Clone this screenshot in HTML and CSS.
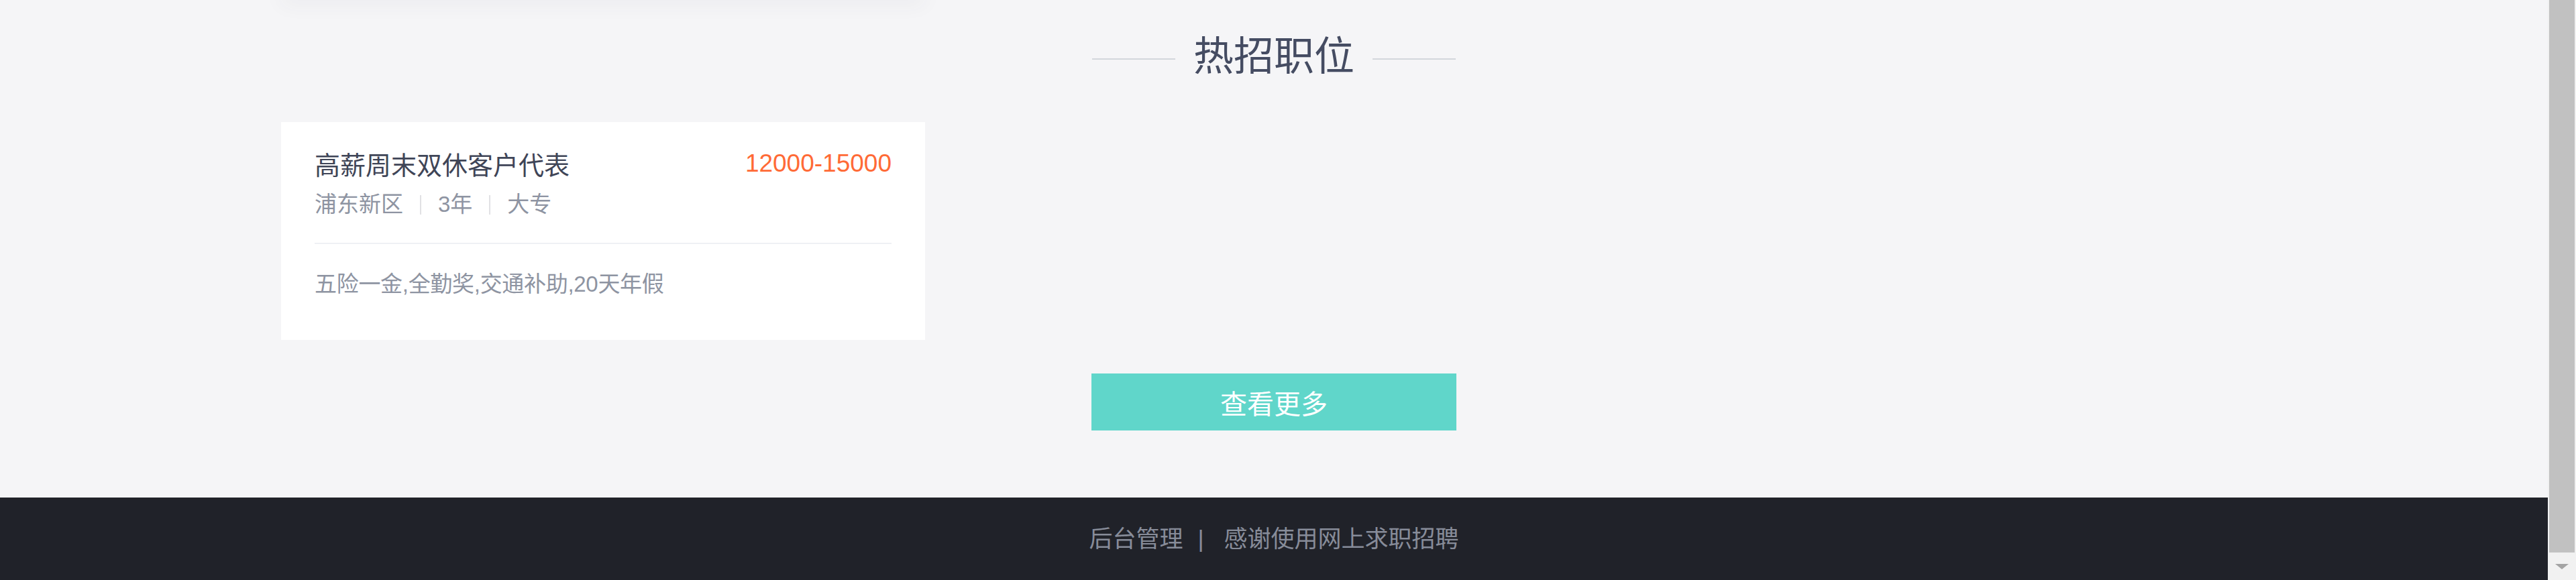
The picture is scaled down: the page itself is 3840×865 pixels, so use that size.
FILE: index.html
```html
<!DOCTYPE html>
<html lang="zh-CN">
<head>
<meta charset="utf-8">
<title>热招职位</title>
<link rel="stylesheet" href="styles.css">
</head>
<body>
<div class="viewport">
  <div class="page">
    <div class="container prev">
      <div class="prev-card"></div>
    </div>
    <section class="hot container">
      <h2 class="sec-title"><span class="line"></span><span class="sec-text">热招职位</span><span class="line"></span></h2>
      <div class="jobs">
        <div class="job-card">
          <div class="job-head">
            <span class="job-name">高薪周末双休客户代表</span>
            <span class="job-salary">12000-15000</span>
          </div>
          <div class="job-meta">
            <span>浦东新区</span><span class="sep"></span><span>3年</span><span class="sep"></span><span>大专</span>
          </div>
          <div class="job-divider"></div>
          <div class="job-welfare">五险一金,全勤奖,交通补助,20天年假</div>
        </div>
      </div>
      <a class="more" href="#">查看更多</a>
    </section>
    <footer class="footer">
      <a href="#" class="footer-link">后台管理</a><span class="footer-sep">|</span><span>感谢使用网上求职招聘</span>
    </footer>
  </div>
  <div class="scrollbar">
    <div class="thumb"></div>
    <div class="arrow"><span class="tri"></span></div>
  </div>
</div>
</body>
</html>
```
FILE: styles.css
```css
* { box-sizing: border-box; }
html, body {
  margin: 0;
  padding: 0;
  height: 865px;
  overflow: hidden;
}
body {
  font-family: "Liberation Sans", "Noto Sans CJK SC", sans-serif;
  background: #f5f5f7;
  color: #3e4455;
}
.viewport {
  display: flex;
  height: 865px;
}
.page {
  flex: 1;
  min-width: 0;
  display: flex;
  flex-direction: column;
  overflow: hidden;
}
.container {
  width: 2960px;
  margin: 0 auto;
}
.prev {
  display: grid;
  grid-template-columns: repeat(3, 960px);
  column-gap: 40px;
}
.prev-card {
  height: 20px;
  margin-top: -20px;
  background: #ffffff;
  box-shadow: 0 6px 30px rgba(60, 60, 90, 0.06);
}
.hot {
  padding-top: 40px;
  display: flex;
  flex-direction: column;
  align-items: center;
}
.sec-title {
  margin: 0;
  display: flex;
  align-items: center;
  gap: 27px;
  font-weight: normal;
  font-size: 60px;
  line-height: 90px;
  color: #454c62;
}
.sec-title .line {
  width: 124px;
  height: 2px;
  margin-top: 6px;
  background: #d3d6dc;
}
.jobs {
  align-self: stretch;
  margin-top: 52px;
  display: grid;
  grid-template-columns: repeat(3, 960px);
  column-gap: 40px;
}
.job-card {
  background: #ffffff;
  padding: 37px 50px 61px;
}
.job-head {
  display: flex;
  justify-content: space-between;
  align-items: flex-start;
}
.job-name {
  font-size: 38px;
  line-height: 56px;
  color: #3f4557;
}
.job-salary {
  font-family: "Liberation Sans", sans-serif;
  font-size: 37px;
  line-height: 56px;
  color: #ff6a36;
  margin-top: -3px;
}
.job-meta {
  margin-top: 8px;
  display: flex;
  align-items: center;
  font-size: 33px;
  line-height: 44px;
  color: #8e94a2;
}
.sep {
  width: 2px;
  height: 29px;
  background: #e1e1e4;
  margin: 0 25px;
}
.job-divider {
  margin-top: 35px;
  height: 2px;
  background: #eff0f4;
}
.job-welfare {
  margin-top: 38px;
  font-size: 33px;
  line-height: 44px;
  color: #8e94a2;
  letter-spacing: -0.3px;
}
.more {
  margin-top: 50px;
  width: 544px;
  height: 85px;
  display: flex;
  align-items: center;
  justify-content: center;
  background: #60d6ca;
  color: #ffffff;
  font-size: 40px;
  text-decoration: none;
}
.footer {
  margin-top: 100px;
  flex: 1;
  background: #202229;
  display: flex;
  justify-content: center;
  align-items: flex-start;
  padding-top: 37px;
  font-size: 35px;
  line-height: 50px;
  color: #878c99;
}
.footer-link {
  color: #878c99;
  text-decoration: none;
}
.footer-sep {
  margin: 0 30px 0 22px;
}
.scrollbar {
  width: 42px;
  flex: none;
  background: #f1f1f1;
  display: flex;
  flex-direction: column;
}
.thumb {
  flex: 1;
  margin: 0 2px;
  background: #c1c1c1;
}
.arrow {
  height: 41px;
  display: flex;
  align-items: center;
  justify-content: center;
}
.tri {
  width: 0;
  height: 0;
  border-left: 10px solid transparent;
  border-right: 10px solid transparent;
  border-top: 8px solid #a3a3a3;
}
```
